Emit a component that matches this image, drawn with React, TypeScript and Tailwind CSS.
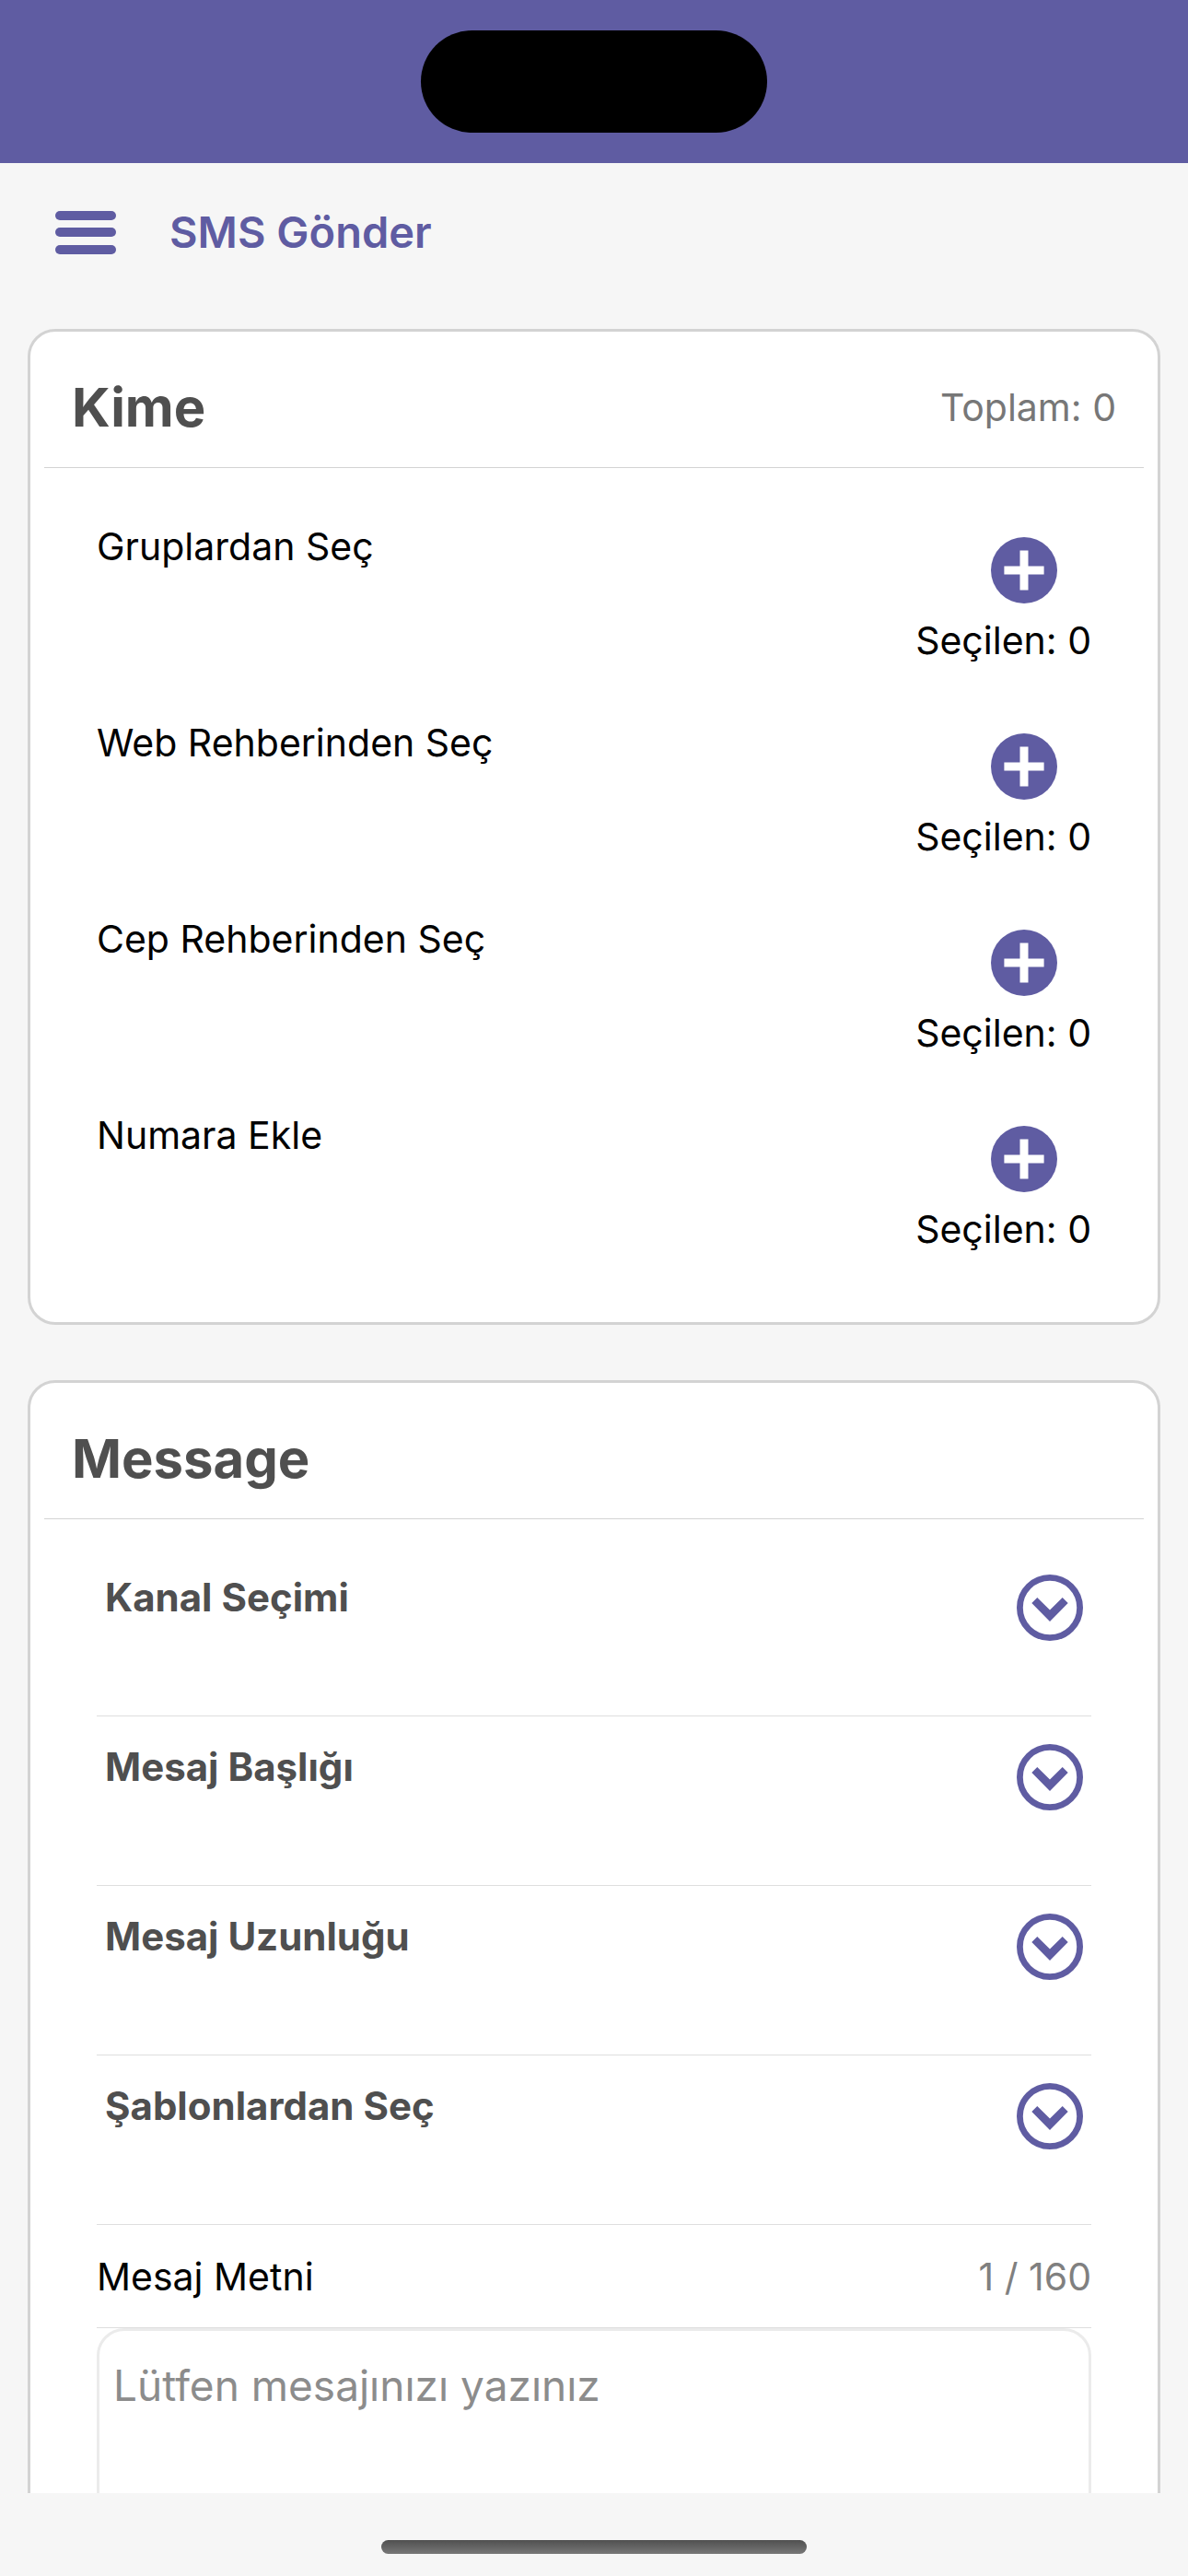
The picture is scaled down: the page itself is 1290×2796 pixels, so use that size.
import type { ReactNode } from "react";

const recipients = [
  { label: "Gruplardan Seç", count: 0 },
  { label: "Web Rehberinden Seç", count: 0 },
  { label: "Cep Rehberinden Seç", count: 0 },
  { label: "Numara Ekle", count: 0 },
];

const options = ["Kanal Seçimi", "Mesaj Başlığı", "Mesaj Uzunluğu", "Şablonlardan Seç"];

function MenuIcon() {
  return (
    <svg width="66" height="48" viewBox="0 0 66 48" fill="currentColor" aria-hidden="true">
      <rect y="1" width="66" height="10" rx="5" />
      <rect y="19" width="66" height="10" rx="5" />
      <rect y="38" width="66" height="10" rx="5" />
    </svg>
  );
}

function AddIcon() {
  return (
    <svg width="72" height="72" viewBox="0 0 72 72" aria-hidden="true">
      <circle cx="36" cy="36" r="36" fill="currentColor" />
      <path d="M31.5 14.4h9v17.1h17.1v9H40.5v17.1h-9V40.5H14.4v-9h17.1z" fill="white" />
    </svg>
  );
}

function ChevronCircleIcon() {
  return (
    <svg width="72" height="72" viewBox="0 0 72 72" aria-hidden="true">
      <circle cx="36" cy="36" r="32.6" fill="none" stroke="currentColor" strokeWidth="6.8" />
      <path d="M22.3 25 36 38.5 49.7 25l6 6L36 51 16.3 31z" fill="currentColor" />
    </svg>
  );
}

function Card({ title, aside, children }: { title: string; aside?: string; children: ReactNode }) {
  return (
    <section className="rounded-[30px] border-[3px] border-[#d3d3d3] bg-white">
      <div className="mx-[15px] flex h-[148px] items-center justify-between border-b border-[#d3d3d3] px-[30px] pt-4">
        <h2 className="text-[58px] font-bold leading-[72px] text-[#4f4f4f]">{title}</h2>
        {aside && <span className="text-[#777777]">{aside}</span>}
      </div>
      <div className="px-[72px]">{children}</div>
    </section>
  );
}

export default function App() {
  return (
    <div className="flex h-screen flex-col bg-[#f6f6f6] font-['Inter',sans-serif] text-[41px] leading-[50px] text-black">
      {/* Status bar */}
      <div className="flex h-[177px] shrink-0 items-center justify-center bg-[#5f5ca2]">
        <div className="h-[111px] w-[376px] rounded-full bg-black" />
      </div>

      <main className="min-h-0 flex-1 overflow-hidden px-[30px]">
        <header className="flex h-[180px] items-center gap-[58px] px-[30px] pb-[30px] text-[#5f5ca2]">
          <button type="button" aria-label="Menü">
            <MenuIcon />
          </button>
          <h1 className="text-[47px] font-semibold leading-[58px]">SMS Gönder</h1>
        </header>

        <div className="flex flex-col gap-[60px]">
          {/* Recipients */}
          <Card title="Kime" aside="Toplam: 0">
            <ul className="pt-[60px] pb-[15px]">
              {recipients.map((item) => (
                <li key={item.label} className="flex h-[213px] items-start justify-between">
                  <span>{item.label}</span>
                  <div className="flex flex-col items-end gap-[15px] pt-[15px]">
                    <button type="button" aria-label={item.label} className="mr-[37px] text-[#5f5ca2]">
                      <AddIcon />
                    </button>
                    <span>Seçilen: {item.count}</span>
                  </div>
                </li>
              ))}
            </ul>
          </Card>

          {/* Message */}
          <Card title="Message">
            {options.map((option) => (
              <div
                key={option}
                className="flex h-[184px] items-start justify-between border-b border-[#dedede] px-[9px] first:mt-[30px] pt-[30px]"
              >
                <span className="text-[42px] font-bold text-[#4f4f4f]">{option}</span>
                <button type="button" aria-label={option} className="text-[#5f5ca2]">
                  <ChevronCircleIcon />
                </button>
              </div>
            ))}
            <div className="flex h-[112px] items-center justify-between border-b border-[#dedede]">
              <label htmlFor="message">Mesaj Metni</label>
              <span className="text-[#808080]">1 / 160</span>
            </div>
            <textarea
              id="message"
              rows={6}
              placeholder="Lütfen mesajınızı yazınız"
              className="block w-full resize-none rounded-[30px] border-[3px] border-[#ebebeb] px-[15px] py-[30px] text-[46px] leading-[58px] outline-none placeholder:text-[#8c8c8c]"
            />
          </Card>
        </div>
      </main>

      {/* Home indicator */}
      <div className="flex h-[90px] shrink-0 items-end justify-center pb-6">
        <div className="h-[15px] w-[462px] rounded-full bg-linear-to-b from-[#505050] to-[#787878]" />
      </div>
    </div>
  );
}
